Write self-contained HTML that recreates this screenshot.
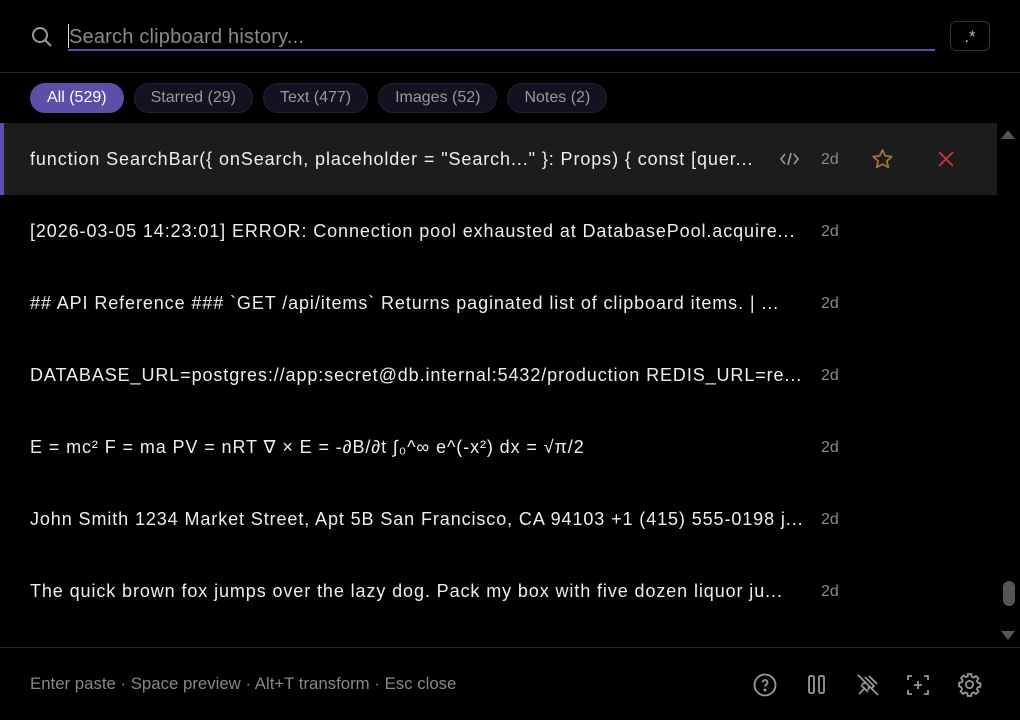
<!DOCTYPE html>
<html><head><meta charset="utf-8"><style>
*{margin:0;padding:0;box-sizing:border-box}
body{width:1020px;height:720px;background:#000;font-family:"Liberation Sans","DejaVu Sans",sans-serif;color:#e6e6e6;position:relative;overflow:hidden}
.hdr{position:absolute;left:0;top:0;width:1020px;height:73px;border-bottom:1px solid #2a2a2a}
.inp{position:absolute;left:68px;top:22px;width:867px;height:29px;border-bottom:2px solid #5b4fa8;font-size:20px;color:#8a8a8a;padding-left:1px;line-height:30px;letter-spacing:.2px}
.inp:before{content:"";position:absolute;left:0;top:2px;width:1px;height:24px;background:#ddd}
.rx{position:absolute;left:950px;top:21px;width:40px;height:30px;border:1px solid #333;border-radius:6px;color:#bbb;font-size:17px;text-align:center;line-height:30px}
.chips{position:absolute;top:83px;left:30px;display:flex;gap:10px}
.chip{height:30px;border-radius:15px;background:#121220;border:1px solid #22222e;color:#999;font-size:16px;line-height:28px;padding:0 16px}
.chip.on{background:#5b4fa8;color:#fff;border-color:#5b4fa8}
.row{position:absolute;left:0;width:997px;height:72px}
.row .t{position:absolute;left:30px;top:0;line-height:72px;font-size:18px;letter-spacing:.9px;color:#eee;white-space:nowrap;overflow:hidden;width:780px}
.row .d{position:absolute;left:821px;line-height:74px;font-size:16px;color:#888}
.sel{background:#1c1c1c}
.sel:before{content:"";position:absolute;left:0;top:0;width:4px;height:72px;background:#5b4fa8}
.ftr{position:absolute;left:0;top:647px;width:1020px;height:73px;border-top:1px solid #2a2a2a}
.ftr .k{position:absolute;left:30px;top:26px;font-size:16.8px;color:#888}
svg{position:absolute}
</style></head><body>
<div class="hdr">
<svg style="left:31px;top:26px" width="22" height="22" viewBox="0 0 22 22" fill="none" stroke="#999" stroke-width="2"><circle cx="9" cy="9" r="7"/><path d="M14 14l6 6"/></svg>
<div class="inp">Search clipboard history...</div>
<div class="rx">.*</div>
</div>
<div class="chips"><div class="chip on">All (529)</div><div class="chip">Starred (29)</div><div class="chip">Text (477)</div><div class="chip">Images (52)</div><div class="chip">Notes (2)</div></div>

<div class="row sel" style="top:123px"><div class="t" style="width:740px">function SearchBar({ onSearch, placeholder = "Search..." }: Props) { const [quer...</div>
<svg style="left:780px;top:27px" width="19" height="18" viewBox="0 0 19 18" fill="none" stroke="#999" stroke-width="1.6"><path d="M5 4L1 9l4 5M14 4l4 5-4 5M11 3L8 15"/></svg>
<div class="d">2d</div>
<svg style="left:871px;top:25px" width="23" height="22" viewBox="0 0 24 23" fill="none" stroke="#a07a35" stroke-width="1.8" stroke-linejoin="round"><path d="M12 2l2.9 6.3 6.8.7-5.1 4.6 1.5 6.7L12 16.9 5.9 20.3l1.5-6.7L2.3 9l6.8-.7z"/></svg>
<svg style="left:938px;top:28px" width="16" height="16" viewBox="0 0 16 16" stroke="#b8343a" stroke-width="2"><path d="M1 1l14 14M15 1L1 15"/></svg>
</div>
<div class="row" style="top:195px"><div class="t">[2026-03-05 14:23:01] ERROR: Connection pool exhausted at DatabasePool.acquire...</div><div class="d">2d</div></div>
<div class="row" style="top:267px"><div class="t">## API Reference ### `GET /api/items` Returns paginated list of clipboard items. | ...</div><div class="d">2d</div></div>
<div class="row" style="top:339px"><div class="t">DATABASE_URL=postgres://app:secret@db.internal:5432/production REDIS_URL=re...</div><div class="d">2d</div></div>
<div class="row" style="top:411px"><div class="t">E = mc² F = ma PV = nRT ∇ × E = -∂B/∂t ∫₀^∞ e^(-x²) dx = √π/2</div><div class="d">2d</div></div>
<div class="row" style="top:483px"><div class="t">John Smith 1234 Market Street, Apt 5B San Francisco, CA 94103 +1 (415) 555-0198 j...</div><div class="d">2d</div></div>
<div class="row" style="top:555px"><div class="t">The quick brown fox jumps over the lazy dog. Pack my box with five dozen liquor ju...</div><div class="d">2d</div></div>

<svg style="left:1000px;top:128px" width="16" height="12"><path d="M1 11L8 2l7 9z" fill="#555"/></svg>
<div style="position:absolute;left:1003px;top:581px;width:12px;height:25px;border-radius:6px;background:#555"></div>
<svg style="left:1000px;top:630px" width="16" height="12"><path d="M1 1h14L8 10z" fill="#555"/></svg>

<div class="ftr"><div class="k">Enter paste · Space preview · Alt+T transform · Esc close</div>
<svg style="left:753px;top:25px" width="24" height="24" viewBox="0 0 24 24" fill="none" stroke="#999" stroke-width="1.8"><circle cx="12" cy="12" r="10.5"/><path d="M9.5 9.5a2.5 2.5 0 1 1 3.5 2.3c-.7.4-1 .9-1 1.7"/><circle cx="12" cy="17" r=".6" fill="#999"/></svg>
<svg style="left:807px;top:25px" width="20" height="24" viewBox="0 0 20 24" fill="none" stroke="#999" stroke-width="1.8"><rect x="2" y="3" width="5" height="17" rx="1.5"/><rect x="12" y="3" width="5" height="17" rx="1.5"/></svg>
<svg style="left:856px;top:25px" width="24" height="24" viewBox="0 0 24 24" fill="none" stroke="#999" stroke-width="1.8"><path d="M2 2l20 20M9 4l9 9-2 2M13 3l8 8M5 12l7 7M8 16l-5 5M6 11l3-1M12 17l1-3"/></svg>
<svg style="left:906px;top:25px" width="24" height="24" viewBox="0 0 24 24" fill="none" stroke="#999" stroke-width="1.8"><path d="M2 7V3h4M18 3h4v4M22 17v4h-4M6 21H2v-4M12 8v8M8 12h8"/></svg>
<svg style="left:957px;top:24px" width="25" height="25" viewBox="0 0 24 24" fill="none" stroke="#999" stroke-width="1.7"><circle cx="12" cy="12" r="3.5"/><path d="M10.3 2h3.4l.5 2.6 1.8.8 2.2-1.5 2.4 2.4-1.5 2.2.8 1.8 2.6.5v3.4l-2.6.5-.8 1.8 1.5 2.2-2.4 2.4-2.2-1.5-1.8.8-.5 2.6h-3.4l-.5-2.6-1.8-.8-2.2 1.5-2.4-2.4 1.5-2.2-.8-1.8L2 13.7v-3.4l2.6-.5.8-1.8-1.5-2.2 2.4-2.4 2.2 1.5 1.8-.8z"/></svg>
</div>
</body></html>
